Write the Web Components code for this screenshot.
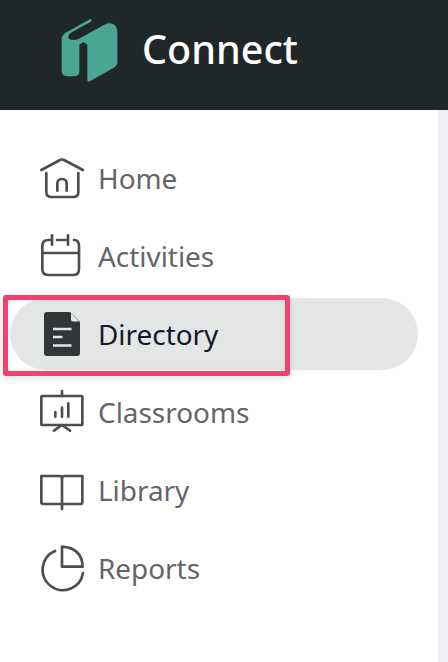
<!DOCTYPE html>
<html>
<head>
<meta charset="utf-8">
<style>
  html, body { margin: 0; height: 100%; }
  body { font-family: "Noto Sans", "Open Sans", sans-serif; overflow: hidden; }
</style>
</head>
<body>
<app-shell>
  <app-header slot="header" title="Connect"></app-header>
  <side-nav slot="nav">
    <nav-item label="Home" icon="home"></nav-item>
    <nav-item label="Activities" icon="calendar"></nav-item>
    <nav-item label="Directory" icon="file" active marked></nav-item>
    <nav-item label="Classrooms" icon="board"></nav-item>
    <nav-item label="Library" icon="book"></nav-item>
    <nav-item label="Reports" icon="pie"></nav-item>
  </side-nav>
</app-shell>
<script>
// icon paths are in 3x units, the svg box is 56x50
const ICONS = {
  home: `<g transform="translate(0,-3)"><path d="M22 54 L78 24 Q84 21 90 24 L147 54"/><path d="M37 63 V120 Q37 135 52 135 H118 Q133 135 133 120 V63"/><path d="M70 116 V95 Q70 81 84 81 Q98 81 98 95 V116"/></g>`,
  calendar: `<g transform="translate(0,-3)"><path d="M54 30 H43 Q25 30 25 48 V118 Q25 135 43 135 H118 Q135 135 135 118 V48 Q135 30 120 30"/><path d="M25 69 H135"/><path d="M54 16 V44"/><path d="M69 30 H102"/><path d="M102 16 V44"/></g>`,
  file: `<g transform="translate(30,9) scale(3)"><path d="M3 0 H26 L36 10 V41 Q36 44 33 44 H3 Q0 44 0 41 V3 Q0 0 3 0 Z" fill="#333639" stroke="none"/><path d="M27 1 L35 9.5 H29 Q27 9.5 27 7.5 Z" fill="#e4e6e5" stroke="none"/><path d="M9 17 H27.5 M9 25 H18.5 M9 33.5 H27.5" stroke="#e4e6e5" stroke-width="2.6" stroke-linecap="butt"/></g>`,
  board: `<g transform="translate(0,-3)"><rect x="22" y="30" width="123" height="87" rx="2"/><path d="M84 15 V30"/><path d="M60 134 L84 117 L108 134"/><path d="M64 78 V92 M84 65 V92 M103 52 V92"/></g>`,
  book: `<g transform="translate(0,9)"><path d="M22 24 H76 Q84 24 84 30 V108 H28 Q22 108 22 102 Z"/><path d="M84 30 Q84 24 92 24 H145 V102 Q145 108 139 108 H84"/><path d="M84 108 V123"/></g>`,
  pie: `<g transform="translate(0,-3)"><path d="M63 27 A 61 61 0 1 0 147 93"/><path d="M84 14 V74 H146 Q144 18 84 14 Z"/></g>`
};

class AppShell extends HTMLElement {
  constructor() {
    super();
    this.attachShadow({ mode: 'open' });
    this.shadowRoot.innerHTML = `
      <style>
        :host { display: grid; grid-template-rows: 110px 1fr; width: 448px; height: 662px; }
        .body { display: grid; grid-template-columns: 438px 1fr; min-height: 0; }
        .side { background: #fff; }
        .rest { background: #eeeff3; }
      </style>
      <slot name="header"></slot>
      <div class="body">
        <div class="side"><slot name="nav"></slot></div>
        <div class="rest"></div>
      </div>
    `;
  }
}

class AppHeader extends HTMLElement {
  constructor() {
    super();
    this.attachShadow({ mode: 'open' });
    this.shadowRoot.innerHTML = `
      <style>
        :host { display: flex; align-items: center; gap: 17px; background: #202728; padding: 0 0 10px 55px; height: 110px; box-sizing: border-box; }
        span { color: #fff; font-size: 39.5px; font-weight: 500; line-height: 1; }
        svg { display: block; flex: none; width: 70px; height: 76px; }
      </style>
      <svg viewBox="0 0 210 228">
        <path fill="#4ba593" d="M107 20 L32 62 Q20 70 20 82 V178 Q20 193 40 193 H55 Q73 193 73 180 V98 L86 90 L97 98 V205 Q97 210 105 208 L180 165 Q187 160 187 152 V55 Q183 32 160 34 Q152 35 145 40 L72 80 Q52 88 42 80 Q35 72 48 62 L110 28 Z"/>
      </svg>
      <span>${this.getAttribute('title')}</span>
    `;
  }
}

class SideNav extends HTMLElement {
  constructor() {
    super();
    this.attachShadow({ mode: 'open' });
    this.shadowRoot.innerHTML = `
      <style>
        :host { display: flex; flex-direction: column; gap: 6px; padding: 32px 20px 0 10px; }
      </style>
      <slot></slot>
    `;
  }
}

class NavItem extends HTMLElement {
  constructor() {
    super();
    this.attachShadow({ mode: 'open' });
    const icon = ICONS[this.getAttribute('icon')];
    const marked = this.hasAttribute('marked') ? '<div class="mark"></div>' : '';
    this.shadowRoot.innerHTML = `
      <style>
        :host { display: flex; align-items: center; gap: 8px; position: relative; height: 72px; padding-left: 24px; border-radius: 36px; color: #636569; font-size: 27.9px; }
        :host([active]) { background: #e4e6e5; color: #14182a; }
        svg { flex: none; width: 56px; height: 50px; fill: none; stroke: #4b4e52; stroke-width: 8; stroke-linecap: round; stroke-linejoin: round; }
        .mark { position: absolute; left: -7px; top: -3px; width: 287px; height: 81px; box-sizing: border-box; border: 5px solid #ee4370; border-radius: 3px; box-shadow: 0 2px 6px rgba(0,0,0,.12), inset 0 0 4px rgba(0,0,0,.08); }
      </style>
      <svg viewBox="0 0 168 150">${icon}</svg>
      <span>${this.getAttribute('label')}</span>
      ${marked}
    `;
  }
}

customElements.define('app-shell', AppShell);
customElements.define('app-header', AppHeader);
customElements.define('side-nav', SideNav);
customElements.define('nav-item', NavItem);
</script>
</body>
</html>
